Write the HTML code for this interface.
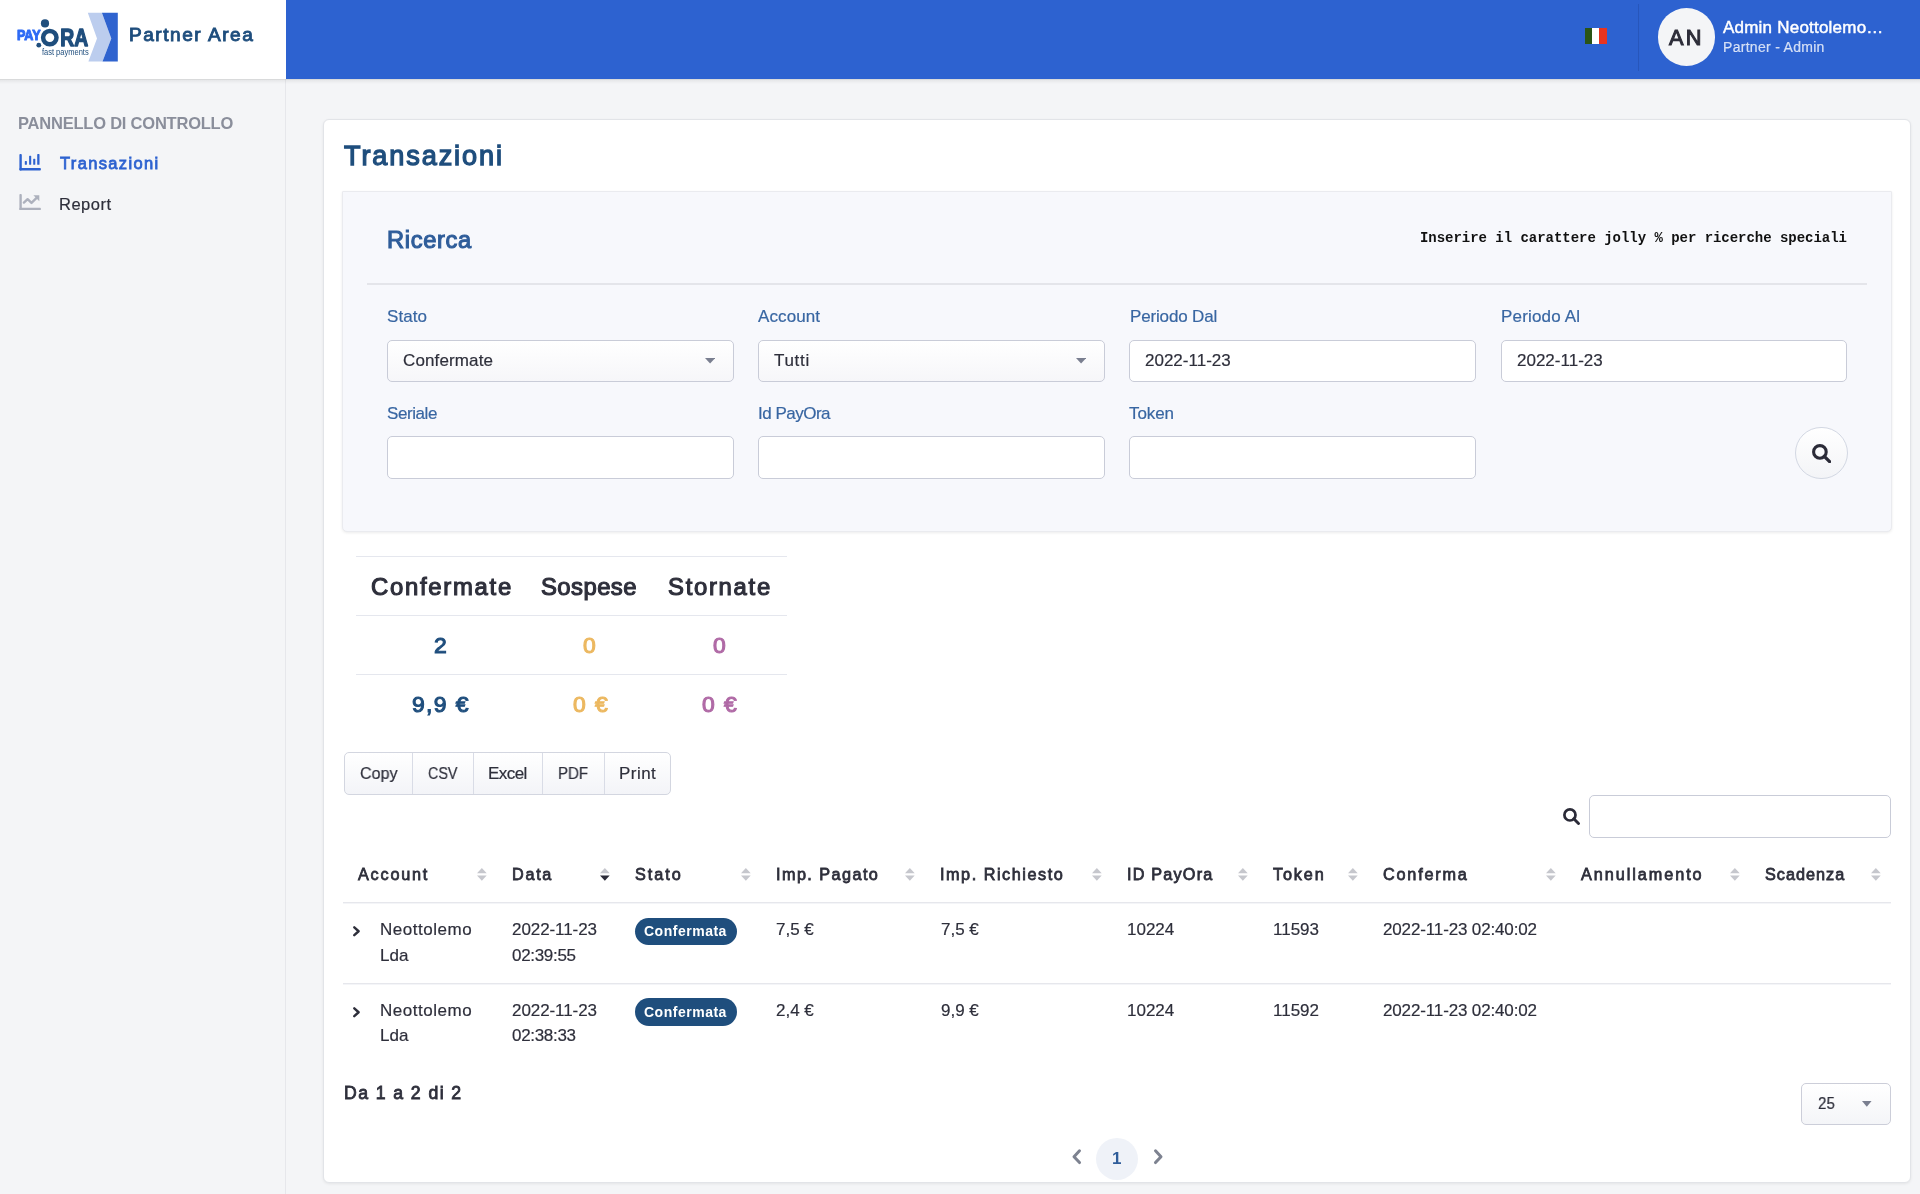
<!DOCTYPE html>
<html><head><meta charset="utf-8"><title>Transazioni - Partner Area</title>
<style>
html,body{margin:0;padding:0;width:1920px;height:1194px;overflow:hidden;background:#f4f5f8;font-family:"Liberation Sans",sans-serif;}
.t{position:absolute;white-space:nowrap;will-change:transform;}
svg{will-change:transform;}
</style></head><body>
<div style="position:absolute;left:0px;top:0px;width:1920px;height:1194px;background:#f4f5f7;"></div>
<div style="position:absolute;left:285px;top:79px;width:1px;height:1115px;background:#e6e7eb;"></div>
<div style="position:absolute;left:0px;top:0px;width:286px;height:79px;background:#fff;"></div>
<div style="position:absolute;left:286px;top:0px;width:1634px;height:79px;background:#2d62d0;"></div>
<div style="position:absolute;left:0px;top:79px;width:1920px;height:1px;background:rgba(0,0,0,0.11);"></div>
<div style="position:absolute;left:0px;top:80px;width:1920px;height:4px;background:linear-gradient(rgba(0,0,0,0.06),rgba(0,0,0,0));"></div>
<svg style="position:absolute;left:0;top:0" width="130" height="79" viewBox="0 0 130 79">
<polygon points="87.8,12.8 101.9,12.8 111.3,38.4 102.5,61.6 88.4,61.6 97,38.4" fill="#bccdee"/>
<polygon points="101.9,12.8 117.8,12.8 117.8,61.6 102.5,61.6 111.3,38.4" fill="#2f63cf"/>
<circle cx="45" cy="23.4" r="4.1" fill="#1f4e7d"/>
<circle cx="38.8" cy="45.2" r="2.4" fill="#1f4e7d"/>
<text x="16.9" y="40.2" font-family="Liberation Sans" font-weight="700" font-size="15" fill="#2f6bf5" stroke="#2f6bf5" stroke-width="1.1" stroke-linejoin="round" textLength="23.8" lengthAdjust="spacingAndGlyphs">PAY</text>
<circle cx="49.8" cy="37.6" r="6.7" stroke="#1f4e7d" stroke-width="4.5" fill="none"/>
<text x="60.3" y="45.9" font-family="Liberation Sans" font-weight="700" font-size="23.5" fill="#1f4e7d" stroke="#1f4e7d" stroke-width="1.3" stroke-linejoin="round" textLength="28" lengthAdjust="spacingAndGlyphs">RA</text>
<text x="41.9" y="54.8" font-family="Liberation Sans" font-size="8.2" fill="#1f4e7d" textLength="46.8" lengthAdjust="spacingAndGlyphs">fast payments</text>
</svg>
<div class="t" style="left:128.70px;top:25.08px;font-size:19.1px;line-height:19.1px;color:#1f4e7d;font-weight:400;font-family:'Liberation Sans', sans-serif;letter-spacing:1.507px;-webkit-text-stroke:0.90px #1f4e7d;">Partner Area</div>
<div style="position:absolute;left:1585px;top:27.5px;width:7px;height:16.5px;background:#2a5415;"></div>
<div style="position:absolute;left:1592px;top:27.5px;width:7px;height:16.5px;background:#ffffff;"></div>
<div style="position:absolute;left:1599px;top:27.5px;width:7.5px;height:16.5px;background:#e8341f;"></div>
<div style="position:absolute;left:1637.5px;top:4px;width:1px;height:67px;background:rgba(0,0,40,0.12);"></div>
<div style="position:absolute;left:1657.7px;top:8.2px;width:57.4px;height:57.4px;background:#f4f5f7;border-radius:50%;"></div>
<div class="t" style="left:1669.20px;top:27.27px;font-size:21.77px;line-height:21.77px;color:#2e2e3a;font-weight:400;font-family:'Liberation Sans', sans-serif;letter-spacing:2.357px;-webkit-text-stroke:1.03px #2e2e3a;">AN</div>
<div class="t" style="left:1723.40px;top:19.36px;font-size:17px;line-height:17px;color:#ffffff;font-weight:400;font-family:'Liberation Sans', sans-serif;letter-spacing:0.217px;-webkit-text-stroke:0.20px #ffffff;-webkit-text-stroke:0.45px #fff;">Admin Neottolemo…</div>
<div class="t" style="left:1723.40px;top:39.75px;font-size:14px;line-height:14px;color:rgba(255,255,255,0.78);font-weight:400;font-family:'Liberation Sans', sans-serif;letter-spacing:0.296px;-webkit-text-stroke:0.17px rgba(255,255,255,0.78);">Partner - Admin</div>
<div class="t" style="left:17.60px;top:114.73px;font-size:16.5px;line-height:16.5px;color:#8a8e9b;font-weight:700;font-family:'Liberation Sans', sans-serif;letter-spacing:-0.219px;">PANNELLO DI CONTROLLO</div>
<svg style="position:absolute;left:19px;top:154px" width="23" height="17" viewBox="0 0 23 17">
<rect x="0.4" y="0" width="2.4" height="16.5" rx="0.9" fill="#2d62d0"/>
<rect x="0.4" y="14.1" width="21.5" height="2.4" rx="0.9" fill="#2d62d0"/>
<rect x="5.8" y="7.1" width="2.1" height="3.7" rx="0.6" fill="#2d62d0"/>
<rect x="10.1" y="1.8" width="2.1" height="9" rx="0.6" fill="#2d62d0"/>
<rect x="14.2" y="4.8" width="2.1" height="6" rx="0.6" fill="#2d62d0"/>
<rect x="18.2" y="0.1" width="2.3" height="10.7" rx="0.6" fill="#2d62d0"/>
</svg>
<div class="t" style="left:59.60px;top:156.42px;font-size:16.52px;line-height:16.52px;color:#2d62d0;font-weight:400;font-family:'Liberation Sans', sans-serif;letter-spacing:1.333px;-webkit-text-stroke:0.78px #2d62d0;">Transazioni</div>
<svg style="position:absolute;left:19px;top:194px" width="23" height="17" viewBox="0 0 23 17">
<rect x="0.4" y="0" width="2.4" height="16.1" rx="0.9" fill="#adb1bd"/>
<rect x="0.4" y="13.8" width="21.5" height="2.3" rx="0.9" fill="#adb1bd"/>
<path d="M4.9 8.6 L8.6 5.2 L12.5 8.9 L17.6 3.9" stroke="#adb1bd" stroke-width="2.4" fill="none" stroke-linecap="round" stroke-linejoin="round"/>
<polygon points="14.4,1.3 20.3,1.3 20.3,7.2" fill="#adb1bd"/>
</svg>
<div class="t" style="left:58.90px;top:196.03px;font-size:16.5px;line-height:16.5px;color:#2e2f3b;font-weight:400;font-family:'Liberation Sans', sans-serif;letter-spacing:0.516px;-webkit-text-stroke:0.20px #2e2f3b;">Report</div>
<div style="position:absolute;left:323px;top:119px;width:1588px;height:1063.5px;background:#fff;border:1px solid #e2e4e8;border-radius:6px;box-sizing:border-box;box-shadow:0 1px 3px rgba(0,0,0,0.07);"></div>
<div class="t" style="left:343.75px;top:142.04px;font-size:27.12px;line-height:27.12px;color:#1f4e7d;font-weight:400;font-family:'Liberation Sans', sans-serif;letter-spacing:1.883px;-webkit-text-stroke:1.28px #1f4e7d;">Transazioni</div>
<div style="position:absolute;left:342px;top:191px;width:1549.5px;height:341px;background:#f7f8fc;border:1px solid #eaebef;border-radius:1px 1px 5px 5px;box-sizing:border-box;box-shadow:0 1px 3px rgba(0,0,0,0.08);"></div>
<div class="t" style="left:387.00px;top:229.20px;font-size:23.68px;line-height:23.68px;color:#2f5d9a;font-weight:400;font-family:'Liberation Sans', sans-serif;letter-spacing:0.656px;-webkit-text-stroke:1.12px #2f5d9a;">Ricerca</div>
<div class="t" style="left:1419.90px;top:230.75px;font-size:14px;line-height:14px;color:#111111;font-weight:700;font-family:'Liberation Mono', monospace;letter-spacing:-0.030px;">Inserire il carattere jolly % per ricerche speciali</div>
<div style="position:absolute;left:367px;top:283px;width:1500px;height:2px;background:#e4e5ea;"></div>
<div class="t" style="left:387.00px;top:307.61px;font-size:17px;line-height:17px;color:#3866a2;font-weight:400;font-family:'Liberation Sans', sans-serif;letter-spacing:0.052px;-webkit-text-stroke:0.20px #3866a2;">Stato</div>
<div class="t" style="left:758.30px;top:307.61px;font-size:17px;line-height:17px;color:#3866a2;font-weight:400;font-family:'Liberation Sans', sans-serif;letter-spacing:0.096px;-webkit-text-stroke:0.20px #3866a2;">Account</div>
<div class="t" style="left:1130.00px;top:307.61px;font-size:17px;line-height:17px;color:#3866a2;font-weight:400;font-family:'Liberation Sans', sans-serif;letter-spacing:-0.162px;-webkit-text-stroke:0.20px #3866a2;">Periodo Dal</div>
<div class="t" style="left:1500.80px;top:307.61px;font-size:17px;line-height:17px;color:#3866a2;font-weight:400;font-family:'Liberation Sans', sans-serif;letter-spacing:0.167px;-webkit-text-stroke:0.20px #3866a2;">Periodo Al</div>
<div class="t" style="left:387.10px;top:404.91px;font-size:17px;line-height:17px;color:#3866a2;font-weight:400;font-family:'Liberation Sans', sans-serif;letter-spacing:-0.419px;-webkit-text-stroke:0.20px #3866a2;">Seriale</div>
<div class="t" style="left:758.10px;top:404.91px;font-size:17px;line-height:17px;color:#3866a2;font-weight:400;font-family:'Liberation Sans', sans-serif;letter-spacing:-0.504px;-webkit-text-stroke:0.20px #3866a2;">Id PayOra</div>
<div class="t" style="left:1129.30px;top:404.91px;font-size:17px;line-height:17px;color:#3866a2;font-weight:400;font-family:'Liberation Sans', sans-serif;letter-spacing:-0.090px;-webkit-text-stroke:0.20px #3866a2;">Token</div>
<div style="position:absolute;left:387.3px;top:339.5px;width:346.5px;height:42px;border:1px solid #c9ccd8;border-radius:5px;box-sizing:border-box;background:linear-gradient(#ffffff,#f6f6f9);"></div>
<div style="position:absolute;left:758.3px;top:339.5px;width:346.5px;height:42px;border:1px solid #c9ccd8;border-radius:5px;box-sizing:border-box;background:linear-gradient(#ffffff,#f6f6f9);"></div>
<div style="position:absolute;left:1129.3px;top:339.5px;width:346.5px;height:42px;border:1px solid #c9ccd8;border-radius:5px;box-sizing:border-box;background:#fff;"></div>
<div style="position:absolute;left:1500.8px;top:339.5px;width:346.5px;height:42px;border:1px solid #c9ccd8;border-radius:5px;box-sizing:border-box;background:#fff;"></div>
<div style="position:absolute;left:387.3px;top:436.3px;width:346.5px;height:42.3px;border:1px solid #c9ccd8;border-radius:5px;box-sizing:border-box;background:#fff;"></div>
<div style="position:absolute;left:758.3px;top:436.3px;width:346.5px;height:42.3px;border:1px solid #c9ccd8;border-radius:5px;box-sizing:border-box;background:#fff;"></div>
<div style="position:absolute;left:1129.3px;top:436.3px;width:346.5px;height:42.3px;border:1px solid #c9ccd8;border-radius:5px;box-sizing:border-box;background:#fff;"></div>
<div class="t" style="left:402.80px;top:351.61px;font-size:17px;line-height:17px;color:#2e2f3b;font-weight:400;font-family:'Liberation Sans', sans-serif;letter-spacing:0.132px;-webkit-text-stroke:0.20px #2e2f3b;">Confermate</div>
<div class="t" style="left:774.00px;top:351.61px;font-size:17px;line-height:17px;color:#2e2f3b;font-weight:400;font-family:'Liberation Sans', sans-serif;letter-spacing:0.692px;-webkit-text-stroke:0.20px #2e2f3b;">Tutti</div>
<div class="t" style="left:1145.00px;top:351.61px;font-size:17px;line-height:17px;color:#2e2f3b;font-weight:400;font-family:'Liberation Sans', sans-serif;-webkit-text-stroke:0.20px #2e2f3b;">2022-11-23</div>
<div class="t" style="left:1516.50px;top:351.61px;font-size:17px;line-height:17px;color:#2e2f3b;font-weight:400;font-family:'Liberation Sans', sans-serif;-webkit-text-stroke:0.20px #2e2f3b;">2022-11-23</div>
<svg style="position:absolute;left:705.1px;top:358px" width="10.2" height="5.6" viewBox="0 0 10.2 5.6"><polygon points="0,0 10.2,0 5.1,5.6" fill="#7a7f90"/></svg>
<svg style="position:absolute;left:1076.1px;top:358px" width="10.2" height="5.6" viewBox="0 0 10.2 5.6"><polygon points="0,0 10.2,0 5.1,5.6" fill="#7a7f90"/></svg>
<div style="position:absolute;left:1795.2px;top:426.7px;width:52.5px;height:52.5px;border:1px solid #d3d8e3;border-radius:50%;box-sizing:border-box;background:linear-gradient(#ffffff,#f3f4f7);"></div>
<svg style="position:absolute;left:1812px;top:444.3px" width="19.0" height="19.0" viewBox="0 0 19 19">
<circle cx="7.9" cy="7.9" r="6.3" stroke="#2b2b38" stroke-width="3.1" fill="none"/>
<path d="M12.3 12.3 L17.6 17.6" stroke="#2b2b38" stroke-width="3.3" stroke-linecap="round"/>
</svg>
<div style="position:absolute;left:355.5px;top:556px;width:431px;height:1px;background:#e5e7ee;"></div>
<div style="position:absolute;left:355.5px;top:615px;width:431px;height:1px;background:#e5e7ee;"></div>
<div style="position:absolute;left:355.5px;top:674px;width:431px;height:1px;background:#e5e7ee;"></div>
<div class="t" style="left:370.90px;top:574.59px;font-size:23.88px;line-height:23.88px;color:#2e2f3b;font-weight:400;font-family:'Liberation Sans', sans-serif;letter-spacing:1.716px;-webkit-text-stroke:1.12px #2e2f3b;">Confermate</div>
<div class="t" style="left:541.40px;top:574.59px;font-size:23.88px;line-height:23.88px;color:#2e2f3b;font-weight:400;font-family:'Liberation Sans', sans-serif;letter-spacing:0.429px;-webkit-text-stroke:1.12px #2e2f3b;">Sospese</div>
<div class="t" style="left:668.10px;top:574.59px;font-size:23.88px;line-height:23.88px;color:#2e2f3b;font-weight:400;font-family:'Liberation Sans', sans-serif;letter-spacing:1.705px;-webkit-text-stroke:1.12px #2e2f3b;">Stornate</div>
<div class="t" style="left:433.88px;top:634.20px;font-size:22.92px;line-height:22.92px;color:#1f4e7d;font-weight:400;font-family:'Liberation Sans', sans-serif;-webkit-text-stroke:1.08px #1f4e7d;">2</div>
<div class="t" style="left:582.83px;top:634.20px;font-size:22.92px;line-height:22.92px;color:#ecb860;font-weight:400;font-family:'Liberation Sans', sans-serif;-webkit-text-stroke:1.08px #ecb860;">0</div>
<div class="t" style="left:712.83px;top:634.20px;font-size:22.92px;line-height:22.92px;color:#b06aa6;font-weight:400;font-family:'Liberation Sans', sans-serif;-webkit-text-stroke:1.08px #b06aa6;">0</div>
<div class="t" style="left:412.35px;top:693.00px;font-size:22.92px;line-height:22.92px;color:#1f4e7d;font-weight:400;font-family:'Liberation Sans', sans-serif;letter-spacing:1.382px;-webkit-text-stroke:1.08px #1f4e7d;">9,9 €</div>
<div class="t" style="left:572.55px;top:693.00px;font-size:22.92px;line-height:22.92px;color:#ecb860;font-weight:400;font-family:'Liberation Sans', sans-serif;letter-spacing:1.421px;-webkit-text-stroke:1.08px #ecb860;">0 €</div>
<div class="t" style="left:702.15px;top:693.00px;font-size:22.92px;line-height:22.92px;color:#b06aa6;font-weight:400;font-family:'Liberation Sans', sans-serif;letter-spacing:1.421px;-webkit-text-stroke:1.08px #b06aa6;">0 €</div>
<div style="position:absolute;left:343.9px;top:752.4px;width:327.6px;height:42.2px;border:1px solid #d3d6e0;border-radius:5px;box-sizing:border-box;background:linear-gradient(#ffffff,#f3f4f8);"></div>
<div style="position:absolute;left:412.3px;top:753px;width:1px;height:41px;background:#d9dce6;"></div>
<div style="position:absolute;left:472.5px;top:753px;width:1px;height:41px;background:#d9dce6;"></div>
<div style="position:absolute;left:542.4px;top:753px;width:1px;height:41px;background:#d9dce6;"></div>
<div style="position:absolute;left:603.5px;top:753px;width:1px;height:41px;background:#d9dce6;"></div>
<div class="t" style="left:359.50px;top:764.61px;font-size:17px;line-height:17px;color:#2e2f3b;font-weight:400;font-family:'Liberation Sans', sans-serif;transform:scaleX(0.9450);transform-origin:0 0;-webkit-text-stroke:0.20px #2e2f3b;">Copy</div>
<div class="t" style="left:427.70px;top:764.61px;font-size:17px;line-height:17px;color:#2e2f3b;font-weight:400;font-family:'Liberation Sans', sans-serif;transform:scaleX(0.8439);transform-origin:0 0;-webkit-text-stroke:0.20px #2e2f3b;">CSV</div>
<div class="t" style="left:487.90px;top:764.61px;font-size:17px;line-height:17px;color:#2e2f3b;font-weight:400;font-family:'Liberation Sans', sans-serif;letter-spacing:-0.568px;-webkit-text-stroke:0.20px #2e2f3b;">Excel</div>
<div class="t" style="left:558.20px;top:764.61px;font-size:17px;line-height:17px;color:#2e2f3b;font-weight:400;font-family:'Liberation Sans', sans-serif;transform:scaleX(0.8882);transform-origin:0 0;-webkit-text-stroke:0.20px #2e2f3b;">PDF</div>
<div class="t" style="left:619.30px;top:764.61px;font-size:17px;line-height:17px;color:#2e2f3b;font-weight:400;font-family:'Liberation Sans', sans-serif;letter-spacing:0.462px;-webkit-text-stroke:0.20px #2e2f3b;">Print</div>
<svg style="position:absolute;left:1563.4px;top:807.7px" width="16.72" height="16.72" viewBox="0 0 19 19">
<circle cx="7.9" cy="7.9" r="6.3" stroke="#2b2b38" stroke-width="3.1" fill="none"/>
<path d="M12.3 12.3 L17.6 17.6" stroke="#2b2b38" stroke-width="3.3" stroke-linecap="round"/>
</svg>
<div style="position:absolute;left:1589.1px;top:795.4px;width:301.6px;height:42.4px;border:1px solid #c9ccd8;border-radius:5px;box-sizing:border-box;background:#fff;"></div>
<div class="t" style="left:358.00px;top:866.26px;font-size:16.23px;line-height:16.23px;color:#2e2f3b;font-weight:400;font-family:'Liberation Sans', sans-serif;letter-spacing:1.793px;-webkit-text-stroke:0.77px #2e2f3b;">Account</div>
<svg style="position:absolute;left:477.3px;top:867.8px" width="9.7" height="13" viewBox="0 0 9.7 13"><polygon points="4.85,0 9.7,5.3 0,5.3" fill="#c6c7cd"/><polygon points="0,7.5 9.7,7.5 4.85,12.8" fill="#c6c7cd"/></svg>
<div class="t" style="left:512.00px;top:866.26px;font-size:16.23px;line-height:16.23px;color:#2e2f3b;font-weight:400;font-family:'Liberation Sans', sans-serif;letter-spacing:1.706px;-webkit-text-stroke:0.77px #2e2f3b;">Data</div>
<svg style="position:absolute;left:599.8px;top:867.8px" width="9.7" height="13" viewBox="0 0 9.7 13"><polygon points="4.85,0 9.7,5.3 0,5.3" fill="#c6c7cd"/><polygon points="0,7.5 9.7,7.5 4.85,12.8" fill="#2b2b38"/></svg>
<div class="t" style="left:634.50px;top:866.26px;font-size:16.23px;line-height:16.23px;color:#2e2f3b;font-weight:400;font-family:'Liberation Sans', sans-serif;letter-spacing:1.951px;-webkit-text-stroke:0.77px #2e2f3b;">Stato</div>
<svg style="position:absolute;left:741.3px;top:867.8px" width="9.7" height="13" viewBox="0 0 9.7 13"><polygon points="4.85,0 9.7,5.3 0,5.3" fill="#c6c7cd"/><polygon points="0,7.5 9.7,7.5 4.85,12.8" fill="#c6c7cd"/></svg>
<div class="t" style="left:776.00px;top:866.26px;font-size:16.23px;line-height:16.23px;color:#2e2f3b;font-weight:400;font-family:'Liberation Sans', sans-serif;letter-spacing:1.439px;-webkit-text-stroke:0.77px #2e2f3b;">Imp. Pagato</div>
<svg style="position:absolute;left:905.3px;top:867.8px" width="9.7" height="13" viewBox="0 0 9.7 13"><polygon points="4.85,0 9.7,5.3 0,5.3" fill="#c6c7cd"/><polygon points="0,7.5 9.7,7.5 4.85,12.8" fill="#c6c7cd"/></svg>
<div class="t" style="left:940.00px;top:866.26px;font-size:16.23px;line-height:16.23px;color:#2e2f3b;font-weight:400;font-family:'Liberation Sans', sans-serif;letter-spacing:1.537px;-webkit-text-stroke:0.77px #2e2f3b;">Imp. Richiesto</div>
<svg style="position:absolute;left:1092.3px;top:867.8px" width="9.7" height="13" viewBox="0 0 9.7 13"><polygon points="4.85,0 9.7,5.3 0,5.3" fill="#c6c7cd"/><polygon points="0,7.5 9.7,7.5 4.85,12.8" fill="#c6c7cd"/></svg>
<div class="t" style="left:1127.00px;top:866.26px;font-size:16.23px;line-height:16.23px;color:#2e2f3b;font-weight:400;font-family:'Liberation Sans', sans-serif;letter-spacing:1.193px;-webkit-text-stroke:0.77px #2e2f3b;">ID PayOra</div>
<svg style="position:absolute;left:1238.3px;top:867.8px" width="9.7" height="13" viewBox="0 0 9.7 13"><polygon points="4.85,0 9.7,5.3 0,5.3" fill="#c6c7cd"/><polygon points="0,7.5 9.7,7.5 4.85,12.8" fill="#c6c7cd"/></svg>
<div class="t" style="left:1273.00px;top:866.26px;font-size:16.23px;line-height:16.23px;color:#2e2f3b;font-weight:400;font-family:'Liberation Sans', sans-serif;letter-spacing:1.873px;-webkit-text-stroke:0.77px #2e2f3b;">Token</div>
<svg style="position:absolute;left:1348.3px;top:867.8px" width="9.7" height="13" viewBox="0 0 9.7 13"><polygon points="4.85,0 9.7,5.3 0,5.3" fill="#c6c7cd"/><polygon points="0,7.5 9.7,7.5 4.85,12.8" fill="#c6c7cd"/></svg>
<div class="t" style="left:1383.00px;top:866.26px;font-size:16.23px;line-height:16.23px;color:#2e2f3b;font-weight:400;font-family:'Liberation Sans', sans-serif;letter-spacing:1.806px;-webkit-text-stroke:0.77px #2e2f3b;">Conferma</div>
<svg style="position:absolute;left:1545.9px;top:867.8px" width="9.7" height="13" viewBox="0 0 9.7 13"><polygon points="4.85,0 9.7,5.3 0,5.3" fill="#c6c7cd"/><polygon points="0,7.5 9.7,7.5 4.85,12.8" fill="#c6c7cd"/></svg>
<div class="t" style="left:1580.60px;top:866.26px;font-size:16.23px;line-height:16.23px;color:#2e2f3b;font-weight:400;font-family:'Liberation Sans', sans-serif;letter-spacing:1.951px;-webkit-text-stroke:0.77px #2e2f3b;">Annullamento</div>
<svg style="position:absolute;left:1730.3px;top:867.8px" width="9.7" height="13" viewBox="0 0 9.7 13"><polygon points="4.85,0 9.7,5.3 0,5.3" fill="#c6c7cd"/><polygon points="0,7.5 9.7,7.5 4.85,12.8" fill="#c6c7cd"/></svg>
<div class="t" style="left:1765.00px;top:866.26px;font-size:16.23px;line-height:16.23px;color:#2e2f3b;font-weight:400;font-family:'Liberation Sans', sans-serif;letter-spacing:1.002px;-webkit-text-stroke:0.77px #2e2f3b;">Scadenza</div>
<svg style="position:absolute;left:1871.3px;top:867.8px" width="9.7" height="13" viewBox="0 0 9.7 13"><polygon points="4.85,0 9.7,5.3 0,5.3" fill="#c6c7cd"/><polygon points="0,7.5 9.7,7.5 4.85,12.8" fill="#c6c7cd"/></svg>
<div style="position:absolute;left:343px;top:902px;width:1548px;height:1px;background:#e6e7ec;"></div>
<div style="position:absolute;left:343px;top:903px;width:1548px;height:1px;background:#f4f5f8;"></div>
<div style="position:absolute;left:343px;top:982.5px;width:1548px;height:1px;background:#e6e7ec;"></div>
<div style="position:absolute;left:343px;top:983.5px;width:1548px;height:1px;background:#f4f5f8;"></div>
<svg style="position:absolute;left:353.3px;top:925.8px" width="7.5" height="10.5" viewBox="0 0 7.5 10.5"><path d="M1.3 1.3 L5.6 5.25 L1.3 9.2" stroke="#2e2f3b" stroke-width="2.4" fill="none" stroke-linecap="round" stroke-linejoin="round"/></svg>
<div class="t" style="left:380.30px;top:921.21px;font-size:17px;line-height:17px;color:#2e2f3b;font-weight:400;font-family:'Liberation Sans', sans-serif;letter-spacing:0.530px;-webkit-text-stroke:0.20px #2e2f3b;">Neottolemo</div>
<div class="t" style="left:380.30px;top:946.61px;font-size:17px;line-height:17px;color:#2e2f3b;font-weight:400;font-family:'Liberation Sans', sans-serif;-webkit-text-stroke:0.20px #2e2f3b;">Lda</div>
<div class="t" style="left:512.00px;top:921.21px;font-size:17px;line-height:17px;color:#2e2f3b;font-weight:400;font-family:'Liberation Sans', sans-serif;letter-spacing:-0.076px;-webkit-text-stroke:0.20px #2e2f3b;">2022-11-23</div>
<div class="t" style="left:512.00px;top:946.61px;font-size:17px;line-height:17px;color:#2e2f3b;font-weight:400;font-family:'Liberation Sans', sans-serif;letter-spacing:-0.310px;-webkit-text-stroke:0.20px #2e2f3b;">02:39:55</div>
<div style="position:absolute;left:634.5px;top:917.8000000000001px;width:102.4px;height:27.3px;background:#1f4e7d;border-radius:14px;"></div>
<div class="t" style="left:643.90px;top:924.35px;font-size:14px;line-height:14px;color:#ffffff;font-weight:700;font-family:'Liberation Sans', sans-serif;letter-spacing:0.512px;">Confermata</div>
<div class="t" style="left:775.80px;top:921.21px;font-size:17px;line-height:17px;color:#2e2f3b;font-weight:400;font-family:'Liberation Sans', sans-serif;-webkit-text-stroke:0.20px #2e2f3b;">7,5 €</div>
<div class="t" style="left:940.50px;top:921.21px;font-size:17px;line-height:17px;color:#2e2f3b;font-weight:400;font-family:'Liberation Sans', sans-serif;-webkit-text-stroke:0.20px #2e2f3b;">7,5 €</div>
<div class="t" style="left:1127.00px;top:921.21px;font-size:17px;line-height:17px;color:#2e2f3b;font-weight:400;font-family:'Liberation Sans', sans-serif;-webkit-text-stroke:0.20px #2e2f3b;">10224</div>
<div class="t" style="left:1273.00px;top:921.21px;font-size:17px;line-height:17px;color:#2e2f3b;font-weight:400;font-family:'Liberation Sans', sans-serif;-webkit-text-stroke:0.20px #2e2f3b;">11593</div>
<div class="t" style="left:1383.00px;top:921.21px;font-size:17px;line-height:17px;color:#2e2f3b;font-weight:400;font-family:'Liberation Sans', sans-serif;letter-spacing:-0.143px;-webkit-text-stroke:0.20px #2e2f3b;">2022-11-23 02:40:02</div>
<svg style="position:absolute;left:353.3px;top:1006.5px" width="7.5" height="10.5" viewBox="0 0 7.5 10.5"><path d="M1.3 1.3 L5.6 5.25 L1.3 9.2" stroke="#2e2f3b" stroke-width="2.4" fill="none" stroke-linecap="round" stroke-linejoin="round"/></svg>
<div class="t" style="left:380.30px;top:1001.86px;font-size:17px;line-height:17px;color:#2e2f3b;font-weight:400;font-family:'Liberation Sans', sans-serif;letter-spacing:0.530px;-webkit-text-stroke:0.20px #2e2f3b;">Neottolemo</div>
<div class="t" style="left:380.30px;top:1027.26px;font-size:17px;line-height:17px;color:#2e2f3b;font-weight:400;font-family:'Liberation Sans', sans-serif;-webkit-text-stroke:0.20px #2e2f3b;">Lda</div>
<div class="t" style="left:512.00px;top:1001.86px;font-size:17px;line-height:17px;color:#2e2f3b;font-weight:400;font-family:'Liberation Sans', sans-serif;letter-spacing:-0.076px;-webkit-text-stroke:0.20px #2e2f3b;">2022-11-23</div>
<div class="t" style="left:512.00px;top:1027.26px;font-size:17px;line-height:17px;color:#2e2f3b;font-weight:400;font-family:'Liberation Sans', sans-serif;letter-spacing:-0.310px;-webkit-text-stroke:0.20px #2e2f3b;">02:38:33</div>
<div style="position:absolute;left:634.5px;top:998.45px;width:102.4px;height:27.3px;background:#1f4e7d;border-radius:14px;"></div>
<div class="t" style="left:643.90px;top:1005.00px;font-size:14px;line-height:14px;color:#ffffff;font-weight:700;font-family:'Liberation Sans', sans-serif;letter-spacing:0.512px;">Confermata</div>
<div class="t" style="left:775.80px;top:1001.86px;font-size:17px;line-height:17px;color:#2e2f3b;font-weight:400;font-family:'Liberation Sans', sans-serif;-webkit-text-stroke:0.20px #2e2f3b;">2,4 €</div>
<div class="t" style="left:940.50px;top:1001.86px;font-size:17px;line-height:17px;color:#2e2f3b;font-weight:400;font-family:'Liberation Sans', sans-serif;-webkit-text-stroke:0.20px #2e2f3b;">9,9 €</div>
<div class="t" style="left:1127.00px;top:1001.86px;font-size:17px;line-height:17px;color:#2e2f3b;font-weight:400;font-family:'Liberation Sans', sans-serif;-webkit-text-stroke:0.20px #2e2f3b;">10224</div>
<div class="t" style="left:1273.00px;top:1001.86px;font-size:17px;line-height:17px;color:#2e2f3b;font-weight:400;font-family:'Liberation Sans', sans-serif;-webkit-text-stroke:0.20px #2e2f3b;">11592</div>
<div class="t" style="left:1383.00px;top:1001.86px;font-size:17px;line-height:17px;color:#2e2f3b;font-weight:400;font-family:'Liberation Sans', sans-serif;letter-spacing:-0.143px;-webkit-text-stroke:0.20px #2e2f3b;">2022-11-23 02:40:02</div>
<div class="t" style="left:344.40px;top:1085.34px;font-size:17.67px;line-height:17.67px;color:#2e2f3b;font-weight:400;font-family:'Liberation Sans', sans-serif;letter-spacing:1.418px;-webkit-text-stroke:0.83px #2e2f3b;">Da 1 a 2 di 2</div>
<div style="position:absolute;left:1801.3px;top:1082.5px;width:89.3px;height:42.5px;border:1px solid #ccced9;border-radius:5px;box-sizing:border-box;background:linear-gradient(#ffffff,#f4f5f8);"></div>
<div class="t" style="left:1817.60px;top:1094.91px;font-size:17px;line-height:17px;color:#2e2f3b;font-weight:400;font-family:'Liberation Sans', sans-serif;transform:scaleX(0.8938);transform-origin:0 0;-webkit-text-stroke:0.20px #2e2f3b;">25</div>
<svg style="position:absolute;left:1862.3px;top:1101.2px" width="9.6" height="5.7" viewBox="0 0 9.6 5.7"><polygon points="0,0 9.6,0 4.8,5.7" fill="#7a7f90"/></svg>
<div style="position:absolute;left:1096.3px;top:1137.5px;width:42px;height:42px;background:#eff2f8;border-radius:50%;"></div>
<div class="t" style="left:1112.27px;top:1149.71px;font-size:17px;line-height:17px;color:#2f5d9a;font-weight:700;font-family:'Liberation Sans', sans-serif;">1</div>
<svg style="position:absolute;left:1070px;top:1148px" width="13" height="17" viewBox="0 0 13 17"><path d="M9.5 2.8 L4 8.7 L9.5 14.6" stroke="#7d8290" stroke-width="3" fill="none" stroke-linecap="round" stroke-linejoin="round"/></svg>
<svg style="position:absolute;left:1151.5px;top:1148px" width="13" height="17" viewBox="0 0 13 17"><path d="M3.5 2.8 L9 8.7 L3.5 14.6" stroke="#7d8290" stroke-width="3" fill="none" stroke-linecap="round" stroke-linejoin="round"/></svg>
</body></html>
